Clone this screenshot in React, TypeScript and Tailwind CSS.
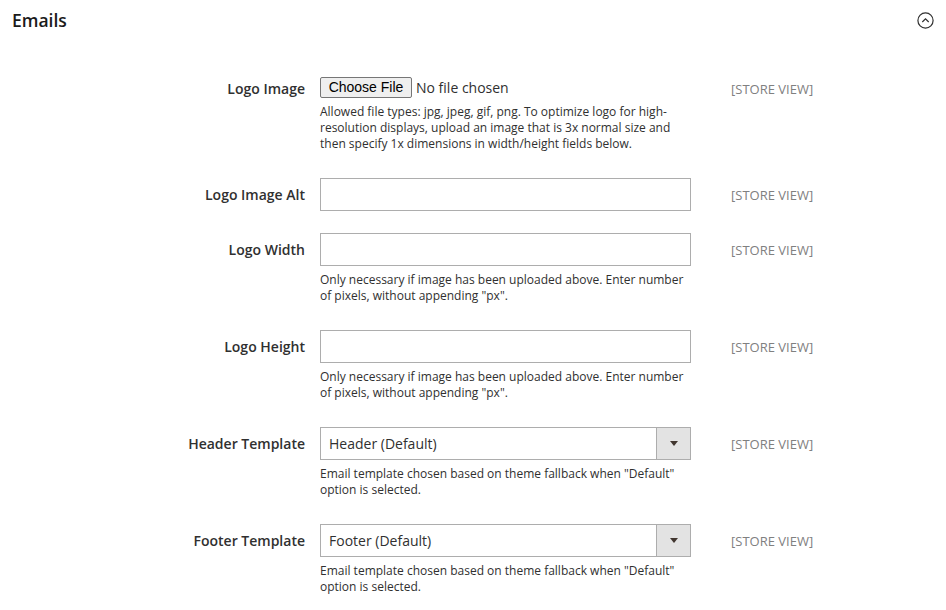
import React from "react";

const font = { fontFamily: '"Open Sans", "Noto Sans", sans-serif' };

function Row({
  label,
  children,
  note,
}: {
  label: string;
  children: React.ReactNode;
  note?: React.ReactNode;
}) {
  return (
    <div className="flex items-start">
      <div className="w-[305px] shrink-0 pt-[7px] text-right text-[14px] leading-[19px] font-semibold text-[#303030]">
        {label}
      </div>
      <div className="ml-[15px] w-[371px] shrink-0">
        {children}
        {note && (
          <div className="mt-[6px] mb-[4px] text-[12px] leading-[16px] text-[#303030]">{note}</div>
        )}
      </div>
      <div className="ml-[40px] pt-[8px] text-[13px] leading-[18px] uppercase text-[#808080]">
        [Store View]
      </div>
    </div>
  );
}

function TextInput() {
  return <div className="h-[33px] w-full border border-[#adadad] bg-white" />;
}

function Select({ value }: { value: string }) {
  return (
    <div className="flex h-[33px] w-full border border-[#adadad] bg-white">
      <div className="flex flex-1 items-center pl-[8px] text-[14px] text-[#303030]">{value}</div>
      <div className="flex w-[34px] items-center justify-center border-l border-[#adadad] bg-[#e3e3e3]">
        <svg width="8" height="5" viewBox="0 0 8 5">
          <path d="M0 0 H8 L4 5 Z" fill="#41362f" />
        </svg>
      </div>
    </div>
  );
}

export default function App() {
  return (
    <div className="h-[610px] w-[946px] bg-white" style={font}>
      <div className="flex items-center justify-between pl-[12px] pr-[12px] pt-[8px]">
        <div className="text-[17.5px] leading-[24px] font-semibold text-[#1a1a1a]">Emails</div>
        <svg width="17" height="17" viewBox="0 0 17 17" className="mt-[1px]">
          <circle cx="8.5" cy="8.5" r="7.6" fill="none" stroke="#303030" strokeWidth="1.2" />
          <path d="M5.3 10 L8.5 6.9 L11.7 10" fill="none" stroke="#303030" strokeWidth="1.2" />
        </svg>
      </div>

      <div className="mt-[40px] flex flex-col gap-[22px]">
        <Row
          label="Logo Image"
          note={
            <>
              Allowed file types: jpg, jpeg, gif, png. To optimize logo for high-
              <br />
              resolution displays, upload an image that is 3x normal size and
              <br />
              then specify 1x dimensions in width/height fields below.
            </>
          }
        >
          <div className="flex items-center pt-[5px]">
            <div
              className="flex h-[21px] w-[92px] items-center justify-center rounded-[2px] border border-[#767676] bg-[#efefef] text-[14px] text-black"
              style={{ fontFamily: '"Liberation Sans", Arial, sans-serif' }}
            >
              Choose File
            </div>
            <span className="ml-[4px] text-[14px] leading-[19px] text-[#303030]">No file chosen</span>
          </div>
        </Row>

        <Row label="Logo Image Alt">
          <TextInput />
        </Row>

        <Row
          label="Logo Width"
          note={
            <>
              Only necessary if image has been uploaded above. Enter number
              <br />
              of pixels, without appending "px".
            </>
          }
        >
          <TextInput />
        </Row>

        <Row
          label="Logo Height"
          note={
            <>
              Only necessary if image has been uploaded above. Enter number
              <br />
              of pixels, without appending "px".
            </>
          }
        >
          <TextInput />
        </Row>

        <Row
          label="Header Template"
          note={
            <>
              Email template chosen based on theme fallback when "Default"
              <br />
              option is selected.
            </>
          }
        >
          <Select value="Header (Default)" />
        </Row>

        <Row
          label="Footer Template"
          note={
            <>
              Email template chosen based on theme fallback when "Default"
              <br />
              option is selected.
            </>
          }
        >
          <Select value="Footer (Default)" />
        </Row>
      </div>
    </div>
  );
}
